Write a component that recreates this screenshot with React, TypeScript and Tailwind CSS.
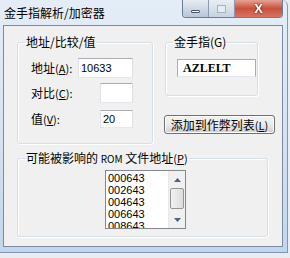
const cjk = "font-['SimSun','Noto_Sans_CJK_SC',sans-serif]";
const latin = "font-['Liberation_Sans','Noto_Sans',sans-serif]";

function Group({
  title,
  className,
  children,
}: {
  title: React.ReactNode;
  className: string;
  children: React.ReactNode;
}) {
  return (
    <fieldset
      className={`rounded-[3px] border border-[#d5dfe5] shadow-[inset_1px_1px_0_#fff,1px_1px_0_#fff] ${className}`}
    >
      <legend className={`ml-[7px] px-[1px] text-[12px] leading-[16px] whitespace-nowrap text-black ${cjk}`}>
        {title}
      </legend>
      {children}
    </fieldset>
  );
}

function TextBox({ value, className }: { value?: string; className: string }) {
  return (
    <div
      className={`flex shrink-0 items-center border border-[#abadb3] border-b-[#e3e9ef] border-l-[#e2e3ea] border-r-[#dbdfe6] bg-white pl-[2px] text-[11px] text-black ${latin} ${className}`}
    >
      {value}
    </div>
  );
}

function Label({ text, k }: { text: string; k: string }) {
  return (
    <span className={`shrink-0 text-[12px] leading-[14px] whitespace-nowrap text-black ${cjk}`}>
      {text}
      <span className="text-[11px]">
        (<u>{k}</u>):
      </span>
    </span>
  );
}

function ScrollArrow({ up }: { up?: boolean }) {
  return (
    <div className="flex h-[17px] items-center justify-center">
      <svg width="7" height="4" viewBox="0 0 7 4">
        {up ? (
          <path d="M0 4 L3.5 0 L7 4 Z" fill="#4d6185" />
        ) : (
          <path d="M0 0 L3.5 4 L7 0 Z" fill="#4d6185" />
        )}
      </svg>
    </div>
  );
}

export default function App() {
  const roms = ["000643", "002643", "004643", "006643", "008643"];

  return (
    <div className="h-[258px] w-[290px] overflow-hidden bg-[#e9edf2]">
      <div className="h-[253px] w-[288px] rounded-t-[6px] border-r border-b border-[#7f97b3] bg-gradient-to-b from-[#e4edf7] via-[#d6e3f1] to-[#c3d6ec]">
        {/* title bar */}
        <div className="flex h-[25px] items-start justify-between">
          <span className={`mt-[5px] ml-[4px] text-[12px] leading-[16px] text-black ${cjk}`}>
            金手指解析/加密器
          </span>
          <div className="mr-[4px] flex h-[18px] overflow-hidden rounded-b-[4px] border border-t-0 border-[#6b7c93]">
            <div className="flex w-[26px] items-center justify-center border-r border-[#8a9bb0] bg-gradient-to-b from-[#e6ecf4] to-[#b8c6d8]">
              <div className="mt-[5px] h-[3px] w-[9px] rounded-[1px] border border-[#4a5564] bg-white" />
            </div>
            <div className="flex w-[26px] items-center justify-center border-r border-[#8a9bb0] bg-gradient-to-b from-[#e9eef5] to-[#c6d2e1]">
              <div className="h-[8px] w-[9px] border border-[#a6b2c2] bg-[#e8edf3]" />
            </div>
            <div className="flex w-[47px] items-center justify-center bg-gradient-to-b from-[#e6a195] via-[#c9503c] to-[#d37562]">
              <span className="text-[13px] leading-[13px] font-bold text-white drop-shadow-[0_0_1px_#5a1a10] font-['Liberation_Sans',sans-serif]">
                X
              </span>
            </div>
          </div>
        </div>

        {/* client area */}
        <div className="ml-[3px] h-[222px] w-[280px] border border-[#7a8ca3] bg-[#f0f0f0]">
          <div className="flex">
            <Group title="地址/比较/值" className="mt-[8px] ml-[13px] h-[110px] w-[136px]">
              <div className="flex w-[115px] flex-col pt-[8px] pl-[13px]">
                <div className="flex h-[20px] items-center justify-between">
                  <Label text="地址" k="A" />
                  <TextBox value="10633" className="h-[20px] w-[55px]" />
                </div>
                <div className="mt-[5px] flex h-[20px] items-center justify-between">
                  <Label text="对比" k="C" />
                  <TextBox className="h-[20px] w-[33px]" />
                </div>
                <div className="mt-[7px] flex h-[18px] items-center justify-between">
                  <Label text="值" k="V" />
                  <TextBox value="20" className="h-[18px] w-[33px]" />
                </div>
              </div>
            </Group>

            <div className="ml-[11px] flex flex-col">
              <Group title="金手指(G)" className="mt-[8px] ml-[1px] h-[62px] w-[93px]">
                <div className="mt-[9px] ml-[11px] flex h-[18px] w-[79px] items-center border border-[#abadb3] border-b-[#e3e9ef] bg-white pl-[5px] text-[12px] font-bold text-black font-['Liberation_Serif',serif]">
                  AZLELT
                </div>
              </Group>
              <button
                className={`mt-[19px] flex h-[19px] w-[111px] items-center justify-center rounded-[3px] border border-[#707070] bg-gradient-to-b from-[#f2f2f2] via-[#ebebeb] to-[#cfcfcf] text-[12px] leading-[14px] whitespace-nowrap text-black shadow-[inset_0_0_0_1px_#fcfcfc] ${cjk}`}
              >
                添加到作弊列表<span className="text-[11px]">(<u>L</u>)</span>
              </button>
            </div>
          </div>

          <Group
            title={
              <>
                可能被影响的 <span className="text-[10px]">ROM</span> 文件地址
                <span className="text-[11px]">(<u>P</u>)</span>
              </>
            }
            className="mt-[6px] ml-[13px] h-[87px] w-[251px]"
          >
            <div className="mt-[3px] ml-[87px] flex h-[59px] w-[81px] border border-[#828790] bg-white">
              <div className={`h-full flex-1 overflow-hidden pt-[1px] pl-[2px] text-[11px] leading-[12px] text-black ${latin}`}>
                {roms.map((r) => (
                  <div key={r}>{r}</div>
                ))}
              </div>
              <div className="flex w-[17px] flex-col border-l border-[#e8e8e8] bg-[#f0f0f0]">
                <ScrollArrow up />
                <div className="mx-[1px] h-[21px] rounded-[2px] border border-[#959595] bg-gradient-to-r from-[#f2f2f2] to-[#dcdcdc]" />
                <div className="flex-1" />
                <ScrollArrow />
              </div>
            </div>
          </Group>
        </div>
      </div>
    </div>
  );
}
